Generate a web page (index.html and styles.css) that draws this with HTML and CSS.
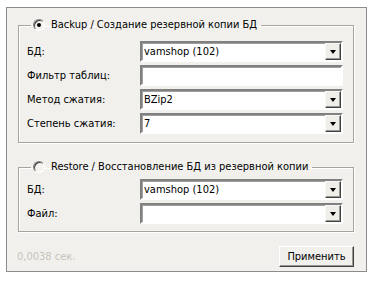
FILE: index.html
```html
<!DOCTYPE html>
<html lang="ru">
<head>
    <meta charset="UTF-8">
    <title>Backup / Restore</title>
    <link rel="stylesheet" href="styles.css">
</head>
<body>
    <div class="panel">
        <fieldset class="group group-backup">
            <legend>
                <span class="radio checked"></span>
                <span class="legend-text">Backup / Создание резервной копии БД</span>
            </legend>
            <div class="row">
                <label>БД:</label>
                <div class="combo"><span class="value">vamshop (102)</span><span class="drop"></span></div>
            </div>
            <div class="row">
                <label>Фильтр таблиц:</label>
                <div class="field"></div>
            </div>
            <div class="row">
                <label>Метод сжатия:</label>
                <div class="combo"><span class="value">BZip2</span><span class="drop"></span></div>
            </div>
            <div class="row">
                <label>Степень сжатия:</label>
                <div class="combo"><span class="value">7</span><span class="drop"></span></div>
            </div>
        </fieldset>

        <fieldset class="group group-restore">
            <legend>
                <span class="radio"></span>
                <span class="legend-text">Restore / Восстановление БД из резервной копии</span>
            </legend>
            <div class="row">
                <label>БД:</label>
                <div class="combo"><span class="value">vamshop (102)</span><span class="drop"></span></div>
            </div>
            <div class="row">
                <label>Файл:</label>
                <div class="combo"><span class="value"></span><span class="drop"></span></div>
            </div>
        </fieldset>

        <div class="footer">
            <span class="timing">0,0038 сек.</span>
            <button class="button">Применить</button>
        </div>
    </div>
</body>
</html>
```

FILE: styles.css
```css
body {
    margin: 0;
    padding: 7px 0 0 6px;
    background: #ffffff;
    font-family: "DejaVu Sans Condensed", "DejaVu Sans", sans-serif;
    font-size: 11px;
    color: #000000;
}
.panel {
    width: 336px;
    height: 263px;
    border: 1px solid #8c8c8c;
    background: #f1f0ec;
    padding: 0 12px 0 11px;
    display: flex;
    flex-direction: column;
}
.group {
    margin: 10px 0 0 0;
    padding: 9px 10px 8px 8px;
    border: 1px solid #a8a69c;
    box-shadow: 1px 1px 0 #ffffff, inset 1px 1px 0 #ffffff;
    display: flex;
    flex-direction: column;
    gap: 3px;
}
.group-restore {
    margin-top: 17px;
    padding-top: 5px;
    padding-bottom: 7px;
}
.group legend {
    margin-left: 4px;
    padding: 0 4px 0 2px;
    display: flex;
    align-items: center;
    gap: 6px;
    line-height: 14px;
}
.radio {
    width: 12px;
    height: 12px;
    border-radius: 50%;
    background: #f4f3ee;
    border: 1px solid;
    border-color: #808080 #ffffff #ffffff #808080;
    box-shadow: inset 1px 1px 0 #404040;
    box-sizing: border-box;
    position: relative;
}
.radio.checked::after {
    content: "";
    position: absolute;
    left: 3px;
    top: 3px;
    width: 4px;
    height: 4px;
    border-radius: 50%;
    background: #000000;
}
.row {
    display: flex;
    align-items: center;
    height: 21px;
}
.row label {
    width: 113px;
}
.combo, .field {
    flex: 1;
    height: 21px;
    box-sizing: border-box;
    background: #ffffff;
    border: 2px solid;
    border-color: #808080 #ffffff #ffffff #808080;
    box-shadow: inset 1px 1px 0 #a0a0a0;
    display: flex;
    align-items: center;
}
.combo .value {
    flex: 1;
    padding-left: 2px;
}
.drop {
    width: 16px;
    height: 17px;
    box-sizing: border-box;
    background: #efeee9;
    border: 1px solid;
    border-color: #f8f8f6 #404040 #404040 #f8f8f6;
    box-shadow: inset -1px -1px 0 #9a9a94;
    position: relative;
}
.drop::after {
    content: "";
    position: absolute;
    left: 4px;
    top: 6px;
    border-left: 3.5px solid transparent;
    border-right: 3.5px solid transparent;
    border-top: 4px solid #000000;
}
.footer {
    display: flex;
    justify-content: space-between;
    align-items: center;
    margin-top: 14px;
}
.timing {
    color: #c6c5bd;
    margin-left: -1px;
}
.button {
    width: 75px;
    height: 21px;
    font: inherit;
    color: #000000;
    background: #f1f0ec;
    border: 1px solid;
    border-color: #ffffff #404040 #404040 #ffffff;
    box-shadow: inset -1px -1px 0 #9a9a94;
    padding: 0;
}
```
